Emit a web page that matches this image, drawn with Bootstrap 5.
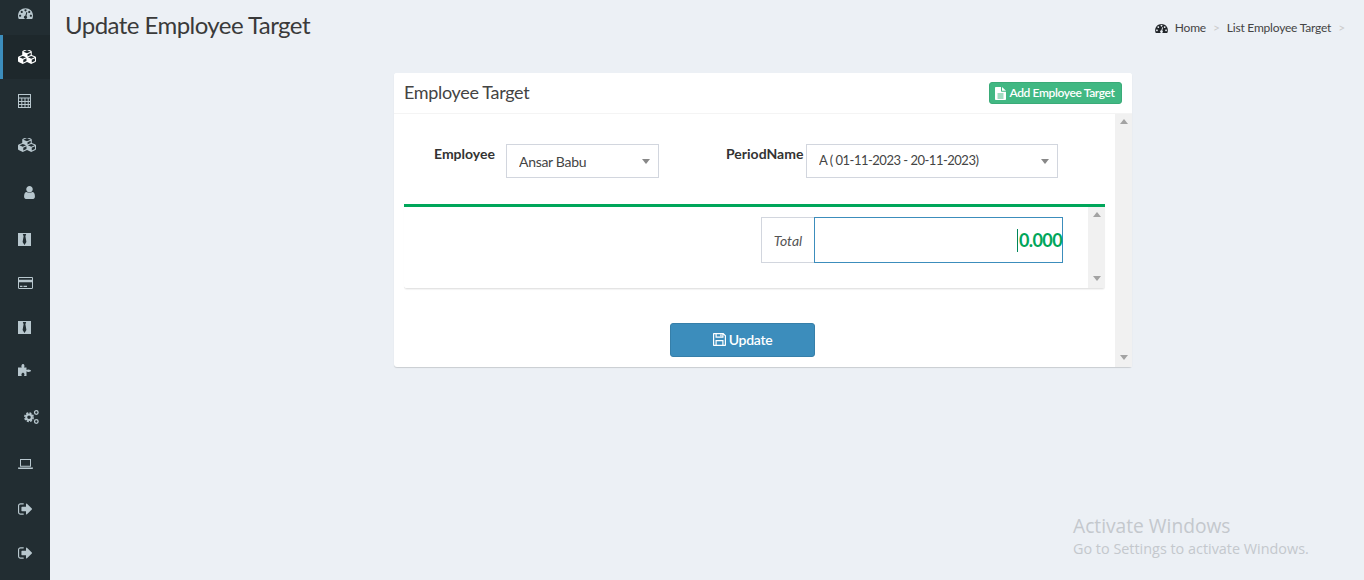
<!DOCTYPE html>
<html lang="en">
<head>
<meta charset="utf-8">
<title>Update Employee Target</title>
<link rel="stylesheet" href="https://cdn.jsdelivr.net/npm/bootstrap@5.3.0/dist/css/bootstrap.min.css">
<style>
html,body{height:100%;overflow:hidden}
body{background:#ecf0f5;color:#333;font-family:"Lato","Liberation Sans",sans-serif;font-size:14px}
.shell{height:580px}
.side{width:50px;background:#222d32;color:#b8c7ce;flex:none}
.side-item{height:44px;padding-left:18px;display:flex;align-items:center}
.side-item.top{height:35px;padding-bottom:9px}
.side-item.on{background:#1e282c;color:#fff;border-left:3px solid #3c8dbc;padding-left:15px}
.side-item.shift{padding-left:24px}
.side-item.h46{height:46px}
.side-item.h48{height:48px}
.side-item.pb2{padding-top:4px}
.side-item.up1{padding-bottom:2px}
.main{min-width:0}
.page-head{height:73px;padding:12px 12px 0 15px}
.page-title{font-size:24px;line-height:26px;font-weight:400;color:#3a3a3a;margin:0;letter-spacing:-.55px}
.crumbs{font-size:12px;color:#444;margin-top:7px;letter-spacing:-.2px}
.crumbs .sep{color:#ccc;margin:0 7px}
.crumbs .home{margin-left:7px}
.panel{width:738px;height:294px;margin-left:344px;background:#fff;border:0;border-radius:3px;box-shadow:0 1px 1px rgba(0,0,0,.15)}
.panel-top{height:41px;padding:0 10px;border-bottom:1px solid #f4f4f4;background:#fff;border-radius:3px 3px 0 0}
.panel-name{font-size:18px;color:#444;margin:0;font-weight:400;letter-spacing:-.33px}
.add-btn{height:22px;width:133px;font-size:12px;font-weight:600;background:#41b883;border:1px solid #3aab78;color:#fff;border-radius:3px;padding:0 2px 0 0;gap:4px;white-space:nowrap;letter-spacing:-.38px}
.add-btn:hover{background:#41b883;color:#fff}
.panel-scroll{min-height:0}
.pane{padding:30px 10px 0 10px;min-width:0}
.field-row{height:60px}
.lbl{font-weight:700;color:#333;font-size:14px;line-height:20px;margin:0}
.lbl-emp{margin-left:30px;width:72px}
.lbl-per{margin-left:67px;width:80px}
.sel{height:34px;border:1px solid #d2d6de;border-radius:0;color:#444;font-size:14px;padding:0 24px 0 12px;background-image:url("data:image/svg+xml,%3Csvg xmlns='http://www.w3.org/2000/svg' viewBox='0 0 8 5'%3E%3Cpath fill='%23888' d='M0 0h8L4 5z'/%3E%3C/svg%3E");background-size:8px 5px;background-position:right 8px center}
.sel-emp{width:153px;letter-spacing:-.3px}
.sel-per{width:252px;font-size:13px;letter-spacing:-.5px}
.grid-box{height:85px;width:701px;border-top:3px solid #00a65a;border-bottom:1px solid #e4e4e4;border-radius:0 0 3px 3px;margin-top:0;box-shadow:0 1px 1px rgba(0,0,0,.05)}
.grid-inner{padding:10px 25px 0 0}
.total-group{width:302px;height:46px;flex-wrap:nowrap}
.total-lbl{width:53px;height:46px;background:#fff;border:1px solid #d2d6de;border-right:0;border-radius:0;font-style:italic;color:#555;font-size:14px;padding:0;justify-content:center}
.total-val{height:46px;border:1px solid #3c8dbc!important;border-radius:0!important;color:#00a65a;font-weight:700;font-size:18px;padding:0;margin-left:0!important;box-shadow:none;letter-spacing:-.6px}
.caret-bar{width:1px;height:23px;background:#00875a;margin-right:1px}
.scr{width:17px;background:#f1f1f1;flex:none;padding:5px 0 7px}
.tri-up,.tri-dn{width:0;height:0;border-left:4px solid transparent;border-right:4px solid transparent}
.tri-up{border-bottom:5px solid #a3a3a3}
.tri-dn{border-top:5px solid #a3a3a3}
.save-row{padding:34px 24px 0 0}
.save-btn{width:145px;height:34px;background:#3c8dbc;border:1px solid #367fa9;color:#fff;border-radius:3px;font-size:14px;font-weight:600;padding:0 0 1px;gap:3px;letter-spacing:-.3px}
.save-btn:hover{background:#3c8dbc;color:#fff}
.winmark{position:absolute;left:1073px;top:513px;color:#c4c8cd;font-size:14.4px;line-height:20px;pointer-events:none;font-family:"Open Sans","Liberation Sans",sans-serif}
.winmark .big{font-size:19.2px;line-height:26px}
</style>
</head>
<body>
<svg width="0" height="0" class="d-none">
<symbol id="i-cubes" viewBox="0 128 2176 1664"><path fill="currentColor" d="M640 1632l384-192v-314l-384 164v342zm-64-454l404-173-404-173-404 173zm1088 454l384-192v-314l-384 164v342zm-64-454l404-173-404-173-404 173zm-448-293l384-165v-266l-384 164v267zm-64-379l441-189-441-189-441 189zm1088 518v416q0 36-19 67t-52 47l-448 224q-25 14-57 14t-57-14l-448-224q-4-2-7-4-2 2-7 4l-448 224q-25 14-57 14t-57-14l-448-224q-33-16-52-47t-19-67v-416q0-38 21.500-70t56.500-48l434-186v-400q0-38 21.500-70t56.500-48l448-192q23-10 50-10t50 10l448 192q35 16 56.500 48t21.500 70v400l434 186q36 16 57 48t21 70z"/></symbol>
<symbol id="i-dash" viewBox="0 128 1792 1408"><path fill="currentColor" d="M384 1152q0-53-37.500-90.500t-90.500-37.500-90.500 37.500-37.500 90.500 37.500 90.500 90.500 37.500 90.500-37.500 37.500-90.500zm192-448q0-53-37.500-90.500t-90.500-37.500-90.500 37.500-37.500 90.500 37.500 90.500 90.500 37.500 90.500-37.500 37.500-90.500zm428 481l101-382q6-26-7.500-48.500t-38.500-29.500-48 6.500-30 39.500l-101 382q-60 5-107 43.500t-63 98.500q-20 77 20 146t117 89 146-20 89-117q16-60-6-117t-72-91zm660-33q0-53-37.500-90.500t-90.500-37.500-90.500 37.500-37.500 90.500 37.500 90.500 90.500 37.500 90.500-37.500 37.500-90.500zm-640-640q0-53-37.500-90.500t-90.500-37.500-90.500 37.500-37.500 90.500 37.500 90.500 90.500 37.500 90.500-37.500 37.500-90.500zm448 192q0-53-37.500-90.500t-90.500-37.500-90.500 37.500-37.500 90.500 37.500 90.500 90.500 37.500 90.500-37.500 37.500-90.500zm320 448q0 261-141 483-19 29-54 29h-1402q-35 0-54-29-141-221-141-483 0-182 71-348t191-286 286-191 348-71 348 71 286 191 191 286 71 348z"/></symbol>
<symbol id="i-calc" viewBox="0 0 13 14"><path fill="currentColor" fill-rule="evenodd" d="M0 0h13v14H0zM1 1v2.500h11V1zM1 4.500V7h2.300V4.500zm3.300 0V7h2.200V4.500zm3.200 0V7h2.200V4.500zm3.200 0V7H12V4.500zM1 8v2h2.300V8zm3.300 0v2h2.200V8zm3.200 0v2h2.200V8zm3.200 0v2H12V8zM1 11v2h2.300v-2zm3.300 0v2h2.200v-2zm3.200 0v2h2.200v-2zm3.200 0v2H12v-2z"/></symbol>
<symbol id="i-user" viewBox="256 128 1280 1536"><path fill="currentColor" d="M1536 1399q0 109-62.500 187t-150.500 78h-854q-88 0-150.500-78t-62.500-187q0-85 8.500-160.500t31.500-152 58.500-131 94-89 134.500-34.500q131 128 313 128t313-128q76 0 134.500 34.500t94 89 58.500 131 31.500 152 8.500 160.500zm-256-887q0 159-112.500 271.500t-271.500 112.500-271.500-112.500-112.500-271.500 112.500-271.500 271.500-112.500 271.500 112.500 112.500 271.500z"/></symbol>
<symbol id="i-tie" viewBox="0 0 13 13"><path fill="currentColor" d="M0 0h13v13H0z"/><path fill="#222d32" d="M4.800 1h3.400L7.400 3.200 8.400 9 6.500 12 4.600 9l1-5.800z"/></symbol>
<symbol id="i-card" viewBox="0 0 15 12"><path fill="currentColor" fill-rule="evenodd" d="M1.200 0h12.600C14.500 0 15 .5 15 1.200v9.600c0 .7-.5 1.200-1.200 1.200H1.200C.5 12 0 11.500 0 10.800V1.200C0 .5.500 0 1.200 0zM1 1v1.800h13V1zm0 4.200V11h13V5.200zM2 8.800h2.500V10H2zM5.500 8.800h3.500V10H5.500z"/></symbol>
<symbol id="i-puzzle" viewBox="0 0 13 12"><path fill="currentColor" d="M0 3.500h3.800C3.300 2.800 3.200 2.300 3.500 1.500 3.800.5 4.300 0 5 0s1.200.5 1.400 1.500c.2.800 0 1.300-.4 2h2.500V6c.7-.5 1.200-.7 2-.6C11.900 5.600 13 6 13 6.700s-1.100 1.100-2.500 1.200c-.8.100-1.300-.1-2-.6V12H6c.4-.7.600-1.200.4-1.900-.2-.8-.7-1.400-1.400-1.400s-1.200.6-1.500 1.400c-.2.700-.1 1.200.3 1.900H0z"/></symbol>
<symbol id="i-cogs" viewBox="0 0 15 14"><g fill="none" stroke="currentColor"><circle cx="5" cy="7.200" r="2.800" stroke-width="2"/><circle cx="5" cy="7.200" r="4.200" stroke-width="1.500" stroke-dasharray="2 1.300"/><circle cx="12.300" cy="2.500" r="1.800" stroke-width="1.300"/><circle cx="12.300" cy="11.500" r="1.800" stroke-width="1.300"/></g></symbol>
<symbol id="i-laptop" viewBox="0 0 15 10"><path fill="currentColor" fill-rule="evenodd" d="M2 0h11v7.700H2zM3 1v5.700h9V1zM0 8.500h15V9c0 .6-.4 1-1 1H1c-.6 0-1-.4-1-1z"/></symbol>
<symbol id="i-out" viewBox="64 256 1568 1280"><path fill="currentColor" d="M704 1440q0 4 1 20t.5 26.500-3 23.500-10 19.500-20.500 6.500h-320q-119 0-203.500-84.500t-84.500-203.500v-704q0-119 84.500-203.500t203.500-84.500h320q13 0 22.500 9.500t9.500 22.500q0 4 1 20t.5 26.500-3 23.500-10 19.500-20.500 6.500h-320q-66 0-113 47t-47 113v704q0 66 47 113t113 47h312l11.500 1 11.500 3 8 5.500 7 9 2 13.500zm928-544q0 26-19 45l-544 544q-19 19-45 19t-45-19-19-45v-288h-448q-26 0-45-19t-19-45v-384q0-26 19-45t45-19h448v-288q0-26 19-45t45-19 45 19l544 544q19 19 19 45z"/></symbol>
<symbol id="i-file" viewBox="0 0 11 13"><path fill="currentColor" fill-rule="evenodd" d="M0 .8C0 .3.300 0 .8 0H6v4c0 .4.300.7.700.7H11v7.500c0 .5-.3.800-.8.800H.8c-.5 0-.8-.3-.8-.8zM7 0l4 3.700H7zM2.500 6.500v1h6v-1zm0 2v1h6v-1zm0 2v1h6v-1z"/></symbol>
<symbol id="i-save" viewBox="0 0 13 13"><path fill="currentColor" fill-rule="evenodd" d="M1 0h9.500L13 2.500V12c0 .6-.4 1-1 1H1c-.6 0-1-.4-1-1V1c0-.6.4-1 1-1zM1.200 1.200v10.600H2.500V7h8v4.800h1.300V3L10.500 1.700V4.800h-8V1.200zM3.700 8.200v3.600h5.600V8.200zM3.700 1.200v2.400h5.600V1.200zM7.300 1.600h1.300v1.700H7.300z"/></symbol>
</svg>

<div class="shell d-flex">
  <nav class="side d-flex flex-column">
    <div class="side-item top"><svg width="15" height="12"><use href="#i-dash"/></svg></div>
    <div class="side-item on"><svg width="18" height="14"><use href="#i-cubes"/></svg></div>
    <div class="side-item"><svg width="13" height="14"><use href="#i-calc"/></svg></div>
    <div class="side-item"><svg width="18" height="14"><use href="#i-cubes"/></svg></div>
    <div class="side-item shift h46 pb2"><svg width="11" height="13"><use href="#i-user"/></svg></div>
    <div class="side-item h48 pb2"><svg width="13" height="13"><use href="#i-tie"/></svg></div>
    <div class="side-item"><svg width="15" height="12"><use href="#i-card"/></svg></div>
    <div class="side-item"><svg width="13" height="13"><use href="#i-tie"/></svg></div>
    <div class="side-item up1"><svg width="13" height="12"><use href="#i-puzzle"/></svg></div>
    <div class="side-item shift h48"><svg width="15" height="14"><use href="#i-cogs"/></svg></div>
    <div class="side-item h46"><svg width="15" height="10"><use href="#i-laptop"/></svg></div>
    <div class="side-item"><svg width="14" height="12"><use href="#i-out"/></svg></div>
    <div class="side-item"><svg width="14" height="12"><use href="#i-out"/></svg></div>
  </nav>

  <main class="main flex-grow-1 d-flex flex-column">
    <header class="page-head d-flex justify-content-between align-items-start">
      <h1 class="page-title">Update Employee Target</h1>
      <div class="crumbs d-flex align-items-center">
        <svg width="13" height="10" class="text-dark"><use href="#i-dash"/></svg>
        <span class="home">Home</span><span class="sep">&gt;</span><span>List Employee Target</span><span class="sep">&gt;</span>
      </div>
    </header>

    <section class="panel d-flex flex-column">
      <div class="panel-top d-flex align-items-center justify-content-between">
        <h2 class="panel-name">Employee Target</h2>
        <a class="btn add-btn d-inline-flex align-items-center justify-content-center" href="#"><svg width="11" height="13"><use href="#i-file"/></svg>Add Employee Target</a>
      </div>
      <div class="panel-scroll d-flex flex-grow-1">
        <div class="pane flex-grow-1">
          <div class="field-row d-flex align-items-start">
            <label class="lbl lbl-emp">Employee</label>
            <select class="form-select sel sel-emp"><option>Ansar Babu</option></select>
            <label class="lbl lbl-per">PeriodName</label>
            <select class="form-select sel sel-per"><option>A ( 01-11-2023 - 20-11-2023)</option></select>
          </div>
          <div class="grid-box d-flex">
            <div class="grid-inner flex-grow-1 d-flex justify-content-end">
              <div class="input-group total-group">
                <span class="input-group-text total-lbl">Total</span>
                <div class="form-control total-val d-flex align-items-center justify-content-end"><span class="caret-bar"></span>0.000</div>
              </div>
            </div>
            <div class="scr d-flex flex-column justify-content-between align-items-center"><span class="tri-up"></span><span class="tri-dn"></span></div>
          </div>
          <div class="save-row d-flex justify-content-center">
            <button type="button" class="btn save-btn d-inline-flex align-items-center justify-content-center"><svg width="13" height="13"><use href="#i-save"/></svg>Update</button>
          </div>
        </div>
        <div class="scr d-flex flex-column justify-content-between align-items-center"><span class="tri-up"></span><span class="tri-dn"></span></div>
      </div>
    </section>
  </main>
</div>
<div class="winmark"><div class="big">Activate Windows</div><div>Go to Settings to activate Windows.</div></div>
<script src="https://cdn.jsdelivr.net/npm/bootstrap@5.3.0/dist/js/bootstrap.bundle.min.js"></script>
</body>
</html>
